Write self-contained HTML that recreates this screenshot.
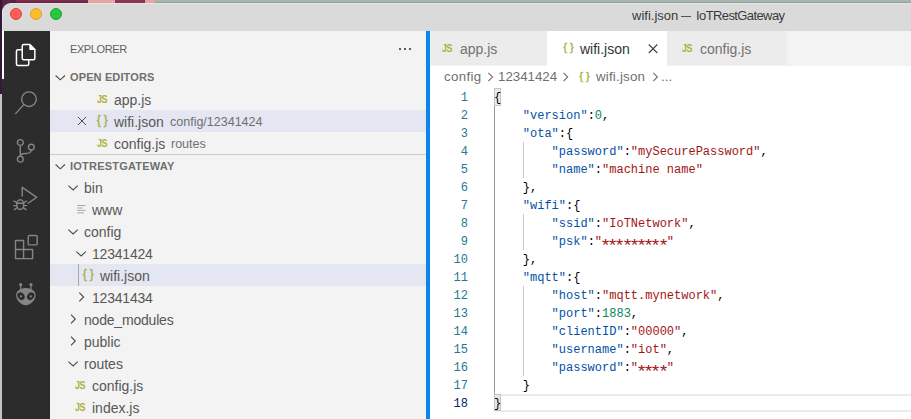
<!DOCTYPE html>
<html><head><meta charset="utf-8">
<style>
*{box-sizing:border-box;margin:0;padding:0}
html,body{width:911px;height:419px;overflow:hidden;background:#2e2e2e;font-family:"Liberation Sans",sans-serif;position:relative}
div,span,svg{position:absolute}
.t{white-space:nowrap;line-height:22px;height:22px}
.ui{font-size:14px;color:#585858;margin-top:1px}
.sm{font-size:12.5px;color:#707070;margin-top:1px}
.row{left:50px;width:376px;height:22px}
.sel{background:#e4e6f1}
.hdr{font-weight:bold;font-size:11px;color:#6f6f6f;line-height:22px;height:22px;white-space:nowrap}
.js{font-weight:bold;font-size:10.5px;color:#b0b03a;line-height:22px;height:22px;letter-spacing:-0.5px;margin-left:-0.5px;margin-top:0;transform:scaleX(0.86);transform-origin:0 0}
.br{font-weight:normal;color:#a0b038;-webkit-text-stroke:0.3px #a0b038;font-size:11.3px;line-height:22px;height:22px;letter-spacing:3px;margin-left:2.3px;margin-top:-1px}
.code{font-family:"Liberation Mono",monospace;font-size:12px;height:18px;line-height:18px;white-space:pre;left:494px;color:#000;margin-top:1px}
.ln{font-family:"Liberation Mono",monospace;font-size:12px;height:18px;line-height:18px;left:430px;width:38px;text-align:right;color:#237893;margin-top:1px}
.ast{display:inline-block;position:relative;transform-origin:50% 6.2px;transform:translateY(3.3px) scale(1.55,1.45)}
.k{color:#0451a5;position:static}.s{color:#a31515;position:static}.n{color:#098658;position:static}
</style></head><body>
<!-- desktop strips -->
<div style="left:0;top:0;width:911px;height:4px;background:#a9b5b1"></div>
<div style="left:0;top:0;width:88px;height:4px;background:#7a2a4c"></div>
<div style="left:0;top:0;width:16px;height:16px;background:#5a2448"></div>
<div style="left:12px;top:2px;width:899px;height:1px;background:rgba(0,0,0,0.12)"></div>
<div style="left:88px;top:0;width:27px;height:4px;background:#e8a4a0"></div>
<div style="left:115px;top:0;width:30px;height:4px;background:#8a3656"></div>
<div style="left:145px;top:0;width:10px;height:4px;background:#e8a4a0"></div>
<div style="left:0;top:0;width:2px;height:94px;background:#33193a"></div>
<div style="left:0;top:94px;width:2px;height:325px;background:#c4c4c4"></div>

<!-- window -->
<div style="left:2px;top:3px;width:920px;height:430px;background:#dadada;border-top-left-radius:9px;overflow:hidden;border-top:1px solid #e6e6e6;border-left:1px solid #e6e6e6">
</div>
<!-- traffic lights -->
<div style="left:10px;top:8px;width:12px;height:12px;border-radius:50%;background:#fd5d56;border:0.5px solid #e0443e"></div>
<div style="left:30px;top:8px;width:12px;height:12px;border-radius:50%;background:#fdbb2e;border:0.5px solid #dea123"></div>
<div style="left:50px;top:8px;width:12px;height:12px;border-radius:50%;background:#27c83f;border:0.5px solid #1aab29"></div>
<div class="t" style="left:632px;top:5px;font-size:13px;color:#3a3a3a">wifi.json</div>
<div style="left:681px;top:16px;width:10px;height:1px;background:#555"></div>
<div class="t" style="left:696px;top:5px;font-size:13px;color:#3a3a3a;letter-spacing:-0.6px">IoTRestGateway</div>

<!-- activity bar -->
<div style="left:2px;top:31px;width:48px;height:388px;background:#2c2c2c"></div>
<div style="left:2px;top:31px;width:2px;height:48px;background:#ffffff"></div>
<svg style="left:10px;top:31px" width="32" height="288" viewBox="0 0 32 288" fill="none" stroke-linecap="round" stroke-linejoin="round">
  <!-- files -->
  <g stroke="#ffffff" stroke-width="1.5">
    <path d="M12.25 18.75 H7.95 Q6.45 18.75 6.45 20.25 V32.95 Q6.45 34.45 7.95 34.45 H17.25 Q18.75 34.45 18.75 32.95 V28.75"/>
    <path d="M13.75 13.45 H19.8 L24.85 18.5 V27.25 Q24.85 28.75 23.35 28.75 H13.75 Q12.25 28.75 12.25 27.25 V14.95 Q12.25 13.45 13.75 13.45 Z"/>
    <path d="M19.8 13.6 V18.5 H24.7 Z" fill="#ffffff" stroke-width="1"/>
  </g>
  <g stroke="#858585" stroke-width="1.4">
    <!-- search (y offset 54) -->
    <circle cx="19" cy="68.2" r="7.3"/>
    <path d="M13.8 73.6 L5.6 82.6"/>
    <!-- source control (y offset 103) -->
    <circle cx="10.3" cy="111.5" r="2.9"/>
    <circle cx="21.3" cy="116.1" r="2.9"/>
    <circle cx="10.3" cy="128.2" r="2.9"/>
    <path d="M10.3 114.4 V125.3"/>
    <path d="M21.3 119 Q21 122 17 122.4 L13.5 122.7 Q10.5 123 10.3 125.3"/>
    <!-- debug (y offset 151) -->
    <path d="M12.2 165 V156.3 L26.8 166.3 L18.2 172.3"/>
    <ellipse cx="10.25" cy="173.6" rx="3.5" ry="4.9"/>
    <path d="M6.9 172.2 H13.6 M3.9 170 L6.8 171.6 M16.6 170 L13.7 171.6 M3.9 174.6 H6.7 M16.6 174.6 H13.8 M4.4 178.6 L7 176.9 M16.1 178.6 L13.5 176.9"/>
    <!-- extensions (y offset 199) -->
    <path d="M5.5 209.5 H13.6 V218.5 H22.6 V227.6 H5.5 Z M5.5 218.5 H13.6 V227.6"/>
    <rect x="18.2" y="204.5" width="9" height="9.4" rx="1.2"/>
  </g>
  <!-- alien (y offset 247) -->
  <g fill="#858585">
    <path d="M15.8 256.9 C21.8 256.9 25.6 260 25.6 264.6 C25.6 269.6 19.8 274.3 15.8 274.3 C11.8 274.3 6.1 269.6 6.1 264.6 C6.1 260 9.8 256.9 15.8 256.9 Z"/>
    <circle cx="10.7" cy="253.6" r="1.6"/><circle cx="21" cy="253.6" r="1.6"/>
    <rect x="10.1" y="253.6" width="1.2" height="4.5"/><rect x="20.4" y="253.6" width="1.2" height="4.5"/>
  </g>
  <g fill="#2c2c2c">
    <ellipse cx="11" cy="265.2" rx="3.3" ry="4.1" transform="rotate(-35 11 265.2)"/>
    <ellipse cx="20.7" cy="265.2" rx="3.3" ry="4.1" transform="rotate(35 20.7 265.2)"/>
  </g>
  <g fill="#858585"><circle cx="10.9" cy="265.4" r="1.1"/><circle cx="20.8" cy="265.4" r="1.1"/></g>
</svg>

<!-- sidebar -->
<div style="left:50px;top:31px;width:376px;height:388px;background:#f3f3f3"></div>
<div class="t" style="left:70px;top:38px;font-size:11px;color:#616161;letter-spacing:-0.4px">EXPLORER</div>
<div style="left:399px;top:48px;width:2px;height:2px;background:#5c5c5c"></div>
<div style="left:404px;top:48px;width:2px;height:2px;background:#5c5c5c"></div>
<div style="left:409px;top:48px;width:2px;height:2px;background:#5c5c5c"></div>

<svg style="left:0;top:0" width="430" height="419" viewBox="0 0 430 419" fill="none" stroke="#4a4a4a" stroke-width="1.1">
  <path d="M55.6 75.5 L60.3 79.8 L65.0 75.5 M55.6 164.5 L60.3 168.8 L65.0 164.5 M68.4 185.6 L73.1 189.9 L77.8 185.6 M68.4 229.6 L73.1 233.9 L77.8 229.6 M76.4 251.6 L81.1 255.9 L85.8 251.6 M79.3 292.7 L83.6 297.0 L79.3 301.3 M71.0 314.7 L75.3 319.0 L71.0 323.3 M71.0 336.7 L75.3 341.0 L71.0 345.3 M68.4 361.6 L73.1 365.9 L77.8 361.6"/>
  <path d="M77.2 205.5 H85.7 M77.2 208 H82.8 M77.2 210.4 H85.7 M77.2 212.9 H84" stroke="#a8a8a8" stroke-width="1"/>
</svg>

<div class="hdr" style="left:70px;top:66px;letter-spacing:0.13px">OPEN EDITORS</div>
<div class="js" style="left:97px;top:88px">JS</div>
<div class="t ui" style="left:114px;top:88px">app.js</div>
<div class="row sel" style="top:110px"></div>
<svg style="left:50px;top:110px" width="60" height="22" fill="none" stroke="#505050" stroke-width="1"><path d="M28 7 L36 15 M36 7 L28 15"/></svg>
<div class="br" style="left:94.5px;top:110px;font-size:12px;letter-spacing:3px">{}</div>
<div class="t ui" style="left:114px;top:110px">wifi.json</div>
<div class="t sm" style="left:170px;top:110px">config/12341424</div>
<div class="js" style="left:97px;top:132px">JS</div>
<div class="t ui" style="left:114px;top:132px">config.js</div>
<div class="t sm" style="left:171px;top:132px">routes</div>
<div style="left:50px;top:154px;width:376px;height:1px;background:#cbcbcb"></div>
<div class="hdr" style="left:70px;top:155px;letter-spacing:0.22px">IOTRESTGATEWAY</div>
<div class="t ui" style="left:84px;top:176px">bin</div>
<div class="t ui" style="left:92px;top:198px">www</div>
<div class="t ui" style="left:84px;top:220px">config</div>
<div class="t ui" style="left:92px;top:242px;letter-spacing:-0.2px">12341424</div>
<div class="row sel" style="top:264px"></div>
<div style="left:78px;top:264px;width:1px;height:22px;background:#a9a9a9"></div>
<div class="br" style="left:80.5px;top:264px;font-size:12px;letter-spacing:3px">{}</div>
<div class="t ui" style="left:100px;top:264px">wifi.json</div>
<div class="t ui" style="left:92px;top:286px;letter-spacing:-0.2px">12341434</div>
<div class="t ui" style="left:84px;top:308px;letter-spacing:-0.2px">node_modules</div>
<div class="t ui" style="left:84px;top:330px">public</div>
<div class="t ui" style="left:84px;top:352px">routes</div>
<div class="js" style="left:75px;top:374px">JS</div>
<div class="t ui" style="left:92px;top:374px">config.js</div>
<div class="js" style="left:75px;top:396px">JS</div>
<div class="t ui" style="left:92px;top:396px">index.js</div>

<!-- sash -->
<div style="left:426px;top:31px;width:4px;height:388px;background:#0a86ee"></div>

<!-- editor -->
<div style="left:430px;top:31px;width:481px;height:388px;background:#ffffff"></div>
<div style="left:430px;top:31px;width:481px;height:35px;background:#f3f3f3"></div>
<div style="left:431px;top:31px;width:116px;height:34px;background:#ececec"></div>
<div style="left:547px;top:31px;width:120px;height:35px;background:#ffffff"></div>
<div style="left:667px;top:31px;width:120px;height:34px;background:#ececec"></div>
<div class="js" style="left:442px;top:37px">JS</div>
<div class="t ui" style="left:460px;top:37px;color:#727272">app.js</div>
<div class="br" style="left:561px;top:37px">{}</div>
<div class="t ui" style="left:580px;top:37px;color:#333333">wifi.json</div>
<svg style="left:640px;top:37px" width="24" height="22" fill="none" stroke="#424242" stroke-width="1.1"><path d="M8.8 7.5 L17.3 16 M17.3 7.5 L8.8 16"/></svg>
<div class="js" style="left:682px;top:37px">JS</div>
<div class="t ui" style="left:700px;top:37px;color:#727272">config.js</div>

<!-- breadcrumbs -->
<div class="t" style="left:444px;top:66px;font-size:13.3px;color:#707070;letter-spacing:0.35px">config</div>
<svg style="left:430px;top:66px" width="481" height="22" fill="none" stroke="#6f6f6f" stroke-width="1.1"><path d="M58.4 6.9 L62.5 11 L58.4 15.1 M133.6 6.9 L137.7 11 L133.6 15.1 M223.3 6.9 L227.4 11 L223.3 15.1"/></svg>
<div class="t" style="left:498px;top:66px;font-size:13.3px;color:#707070">12341424</div>
<div class="br" style="left:577px;top:66px">{}</div>
<div class="t" style="left:596px;top:66px;font-size:13.3px;color:#707070;letter-spacing:0.2px">wifi.json</div>
<div class="t" style="left:661px;top:66px;font-size:13.3px;color:#707070">...</div>

<!-- code -->
<div style="left:494px;top:106px;width:1px;height:288px;background:#9a9a9a"></div>
<div style="left:523px;top:142px;width:1px;height:36px;background:#c9c9c9"></div>
<div style="left:523px;top:214px;width:1px;height:36px;background:#c9c9c9"></div>
<div style="left:523px;top:286px;width:1px;height:90px;background:#c9c9c9"></div>
<div style="left:494px;top:394px;width:417px;height:18px;border-top:2px solid #ececec;border-bottom:2px solid #ececec"></div>
<div style="left:494px;top:88px;width:7px;height:18px;border:1px solid #c4c4c4;background:#ececec"></div>
<div style="left:494px;top:394px;width:7px;height:17px;border:1px solid #c4c4c4;background:#e8e8e8"></div>

<div class="ln" style="top:88px">1</div>
<div class="ln" style="top:106px">2</div>
<div class="ln" style="top:124px">3</div>
<div class="ln" style="top:142px">4</div>
<div class="ln" style="top:160px">5</div>
<div class="ln" style="top:178px">6</div>
<div class="ln" style="top:196px">7</div>
<div class="ln" style="top:214px">8</div>
<div class="ln" style="top:232px">9</div>
<div class="ln" style="top:250px">10</div>
<div class="ln" style="top:268px">11</div>
<div class="ln" style="top:286px">12</div>
<div class="ln" style="top:304px">13</div>
<div class="ln" style="top:322px">14</div>
<div class="ln" style="top:340px">15</div>
<div class="ln" style="top:358px">16</div>
<div class="ln" style="top:376px">17</div>
<div class="ln" style="top:394px;color:#0b216f">18</div>

<div class="code" style="top:88px">{</div>
<div class="code" style="top:106px">    <span class="k">"version"</span>:<span class="n">0</span>,</div>
<div class="code" style="top:124px">    <span class="k">"ota"</span>:{</div>
<div class="code" style="top:142px">        <span class="k">"password"</span>:<span class="s">"mySecurePassword"</span>,</div>
<div class="code" style="top:160px">        <span class="k">"name"</span>:<span class="s">"machine name"</span></div>
<div class="code" style="top:178px">    },</div>
<div class="code" style="top:196px">    <span class="k">"wifi"</span>:{</div>
<div class="code" style="top:214px">        <span class="k">"ssid"</span>:<span class="s">"IoTNetwork"</span>,</div>
<div class="code" style="top:232px">        <span class="k">"psk"</span>:<span class="s">"<span class="ast">*</span><span class="ast">*</span><span class="ast">*</span><span class="ast">*</span><span class="ast">*</span><span class="ast">*</span><span class="ast">*</span><span class="ast">*</span><span class="ast">*</span>"</span></div>
<div class="code" style="top:250px">    },</div>
<div class="code" style="top:268px">    <span class="k">"mqtt"</span>:{</div>
<div class="code" style="top:286px">        <span class="k">"host"</span>:<span class="s">"mqtt.mynetwork"</span>,</div>
<div class="code" style="top:304px">        <span class="k">"port"</span>:<span class="n">1883</span>,</div>
<div class="code" style="top:322px">        <span class="k">"clientID"</span>:<span class="s">"00000"</span>,</div>
<div class="code" style="top:340px">        <span class="k">"username"</span>:<span class="s">"iot"</span>,</div>
<div class="code" style="top:358px">        <span class="k">"password"</span>:<span class="s">"<span class="ast">*</span><span class="ast">*</span><span class="ast">*</span><span class="ast">*</span>"</span></div>
<div class="code" style="top:376px">    }</div>
<div class="code" style="top:394px">}</div>
</body></html>
